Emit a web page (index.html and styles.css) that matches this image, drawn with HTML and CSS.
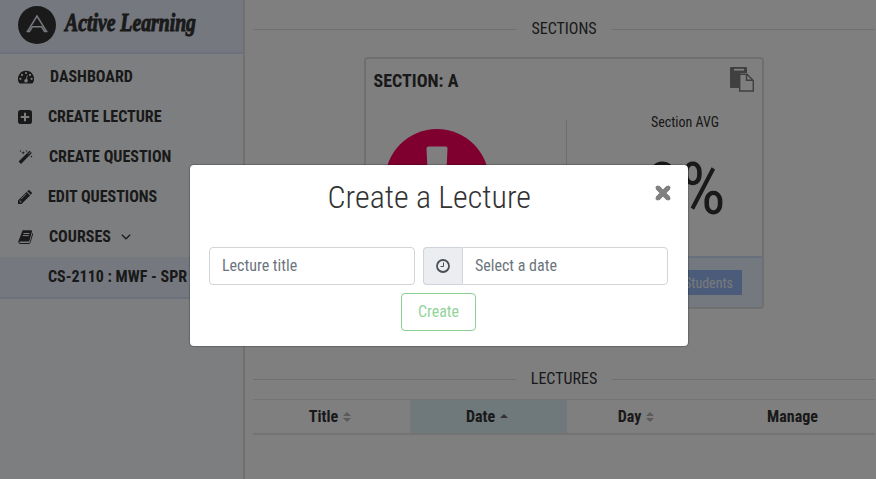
FILE: index.html
```html
<!DOCTYPE html>
<html lang="en">
<head>
<meta charset="utf-8">
<title>Active Learning</title>
<link rel="stylesheet" href="styles.css">
</head>
<body>
<div class="app">
  <aside class="sidebar">
    <header class="brand">
      <svg class="brand-mark" viewBox="0 0 38 38"><circle cx="19" cy="19" r="19" fill="#343434"/><path d="M8.500 25.400H11.500L14.500 20.700H23.500L26.500 25.400H29.500M9.500 25.400 19 10 28.500 25.400" fill="none" stroke="#ecf0ff" stroke-width="1.500"/></svg>
      <svg class="brand-name" width="150" height="40"><text x="3" y="25" textLength="131" lengthAdjust="spacingAndGlyphs">Active Learning</text></svg>
    </header>
    <nav class="menu">
      <a class="item"><svg class="icon wide" viewBox="0 0 16 14"><path d="M8 .8a8 8 0 0 0-6.800 12.300q.2.4.7.4H14q.5 0 .8-.4A8 8 0 0 0 8 .8Z" fill="#333"/><g fill="#fafcff"><circle cx="2.400" cy="8.800" r="1.100"/><circle cx="4" cy="4.900" r="1.100"/><circle cx="8" cy="3.100" r="1.100"/><circle cx="12" cy="4.900" r="1.100"/><circle cx="13.600" cy="8.800" r="1.100"/><path d="m9 5.300.8.200-.9 3.600a1.800 1.800 0 1 1-.9-.2Z"/></g></svg><span class="label">DASHBOARD</span></a>
      <a class="item"><svg class="icon" viewBox="0 0 14 14"><rect width="14" height="14" rx="2.800" fill="#333"/><path d="M7 2.800v8.400M2.800 7h8.400" stroke="#fafcff" stroke-width="2"/></svg><span class="label">CREATE LECTURE</span></a>
      <a class="item"><svg class="icon mid" viewBox="0 0 15 15"><path d="M1.400 13.600 13 2" stroke="#333" stroke-width="3.600"/><path d="m10.400 4.600 2.200-2.200" stroke="#fafcff" stroke-width="1"/><path d="m5 1 .5 1.500L7 3l-1.500.5L5 5l-.5-1.500L3 3l1.500-.5ZM2 0l.4.800.8.300-.8.300L2 2.200l-.4-.8L.8 1l.8-.2ZM8.500 0l.4.800.8.300-.8.300-.4.800-.4-.8-.8-.3.800-.3ZM13.800 6l.4.800.8.300-.8.300-.4.800-.4-.8-.8-.3.800-.3Z" fill="#333"/></svg><span class="label">CREATE QUESTION</span></a>
      <a class="item"><svg class="icon" viewBox="0 0 14 14"><path d="M0 14V10.500L8.600 1.900l3.500 3.500L3.500 14ZM9.300 1.200 10.200.3q.6-.6 1.200 0l2.300 2.300q.6.6 0 1.200l-.9.9Z" fill="#333"/><path d="M1.300 11h1.500v1.700M3 9.200l5.400-5.400" fill="none" stroke="#fafcff" stroke-width=".8"/></svg><span class="label">EDIT QUESTIONS</span></a>
      <a class="item"><svg class="icon mid" viewBox="0 0 15 14"><path d="M4.600.3h8.500q1.200.2.9 1.300l-2.500 8.800q-.4 1-1.400 1H2q-1 .2-.5 1 .2.500 1 .500h8.300q.8 0 1-.6L14.400 3q1 .4.600 1.600l-2.500 8q-.5 1.400-1.700 1.400H2.300Q.3 13.800.2 11.700Z" fill="#333"/><path d="M5.500 3.500h6M4.800 5.600h6" stroke="#fafcff"/></svg><span class="label">COURSES</span><svg class="chevron" viewBox="0 0 10 6"><path d="m.8.8 4.200 4 4.200-4" fill="none" stroke="#333" stroke-width="1.200"/></svg></a>
      <a class="item sub"><span class="label">CS-2110 : MWF - SPR</span></a>
    </nav>
  </aside>
  <main class="main">
    <h2 class="divider sections">SECTIONS</h2>
    <section class="card">
      <header class="card-head"><h3>SECTION: A</h3><svg class="paste" viewBox="0 0 24 25"><path d="M1 0h15q1 0 1 1v5h-5q-3 0-3 3v12H1q-1 0-1-1V1q0-1 1-1Z" fill="#808080"/><path d="M4 2.700h10" stroke="#fff" stroke-width="1.800"/><path d="M9.700 7.200h7.300l6.300 6.300v10.600H9.700ZM16.500 7.200v6h6.800" fill="#fff" stroke="#808080" stroke-width="1.500"/></svg></header>
      <div class="card-body">
        <div class="half"><svg class="alert" viewBox="0 0 104 104"><circle cx="52" cy="52" r="52" fill="#ff005f"/><path d="M43.500 17.500h17q2 0 2 2L60.500 62h-17L41.500 19.500q0-2 2-2ZM44 69h16v16H44Z" fill="#fff"/></svg></div>
        <div class="half stats"><span class="avg">Section AVG</span><strong class="score">0%</strong></div>
      </div>
      <footer class="card-foot"><button class="students">Students</button></footer>
    </section>
    <h2 class="divider lectures">LECTURES</h2>
    <div class="table">
      <div class="th">Title<svg class="sort" viewBox="0 0 8 10"><path d="m0 4 4-4 4 4ZM0 6l4 4 4-4Z" fill="#b4b4b4"/></svg></div>
      <div class="th active">Date<svg class="sort" viewBox="0 0 8 10"><path d="m0 6 4-4 4 4Z" fill="#666"/></svg></div>
      <div class="th">Day<svg class="sort" viewBox="0 0 8 10"><path d="m0 4 4-4 4 4ZM0 6l4 4 4-4Z" fill="#b4b4b4"/></svg></div>
      <div class="th">Manage</div>
    </div>
  </main>
</div>
<div class="backdrop">
  <div class="modal">
    <div class="modal-head"><h1>Create a Lecture</h1><svg class="close" viewBox="0 0 16 16"><path d="m2.600 2.600 10.800 10.800M13.400 2.600 2.600 13.400" stroke="#808080" stroke-width="5"/><path d="m2.600 2.600 10.800 10.800M13.400 2.600 2.600 13.400" stroke="#808080" stroke-width="4" stroke-linecap="round"/></svg></div>
    <div class="fields">
      <div class="input title">Lecture title</div>
      <div class="group"><div class="addon"><svg class="clock" viewBox="0 0 14 14"><circle cx="7" cy="7" r="6" fill="none" stroke="#495057" stroke-width="1.800"/><path d="M7.500 3.500v4H4.500" fill="none" stroke="#495057" stroke-width="1"/></svg></div><div class="input date">Select a date</div></div>
    </div>
    <button class="create">Create</button>
  </div>
</div>
</body>
</html>
```
FILE: styles.css
```css
* { box-sizing: border-box; }
body { margin: 0; overflow: hidden; background: #fff; color: #333; font: 400 16px/24px "Roboto Condensed", Roboto, sans-serif; font-stretch: 75%; }
h1, h2, h3 { margin: 0; font-weight: 400; }
button { font: inherit; font-stretch: 75%; }
svg { display: block; flex: none; }
.app { display: flex; width: 876px; height: 479px; }
.sidebar { width: 245px; flex: none; background: #fafcff; border-right: 2px solid #e0e0e0; }
.brand { display: flex; height: 54px; padding: 6px 0 0 18px; background: #eaf0fe; border-bottom: 2px solid #d8e2fa; }
.brand-mark { width: 38px; height: 38px; }
.brand-name { margin-left: 6px; overflow: visible; }
.brand-name text { font: italic 700 25px "Liberation Serif", serif; fill: #343434; stroke: #343434; stroke-width: 1px; }
.menu { padding-top: 3px; }
.item { display: flex; align-items: center; height: 40px; padding-left: 18px; white-space: nowrap; font-weight: 700; }
.icon { width: 14px; height: 14px; margin-right: 16px; }
.icon.mid { width: 15px; }
.icon.wide { width: 16px; }
.chevron { width: 10px; height: 6px; margin-left: 10px; }
.item.sub { height: 42px; padding: 0 0 0 48px; background: #eaf0fe; border-bottom: 2px solid #d8e2fa; }
.main { flex: 1; padding: 0 1px 0 8px; }
.divider { display: flex; align-items: center; gap: 15px; font-size: 16px; height: 24px; }
.divider::before, .divider::after { content: ""; flex: 1; height: 1px; background: #dedede; }
.sections { margin-top: 17px; }
.card { width: 400px; height: 252px; margin: 16px 0 0 111px; border: 2px solid #dfdfdf; border-radius: 4px; display: flex; flex-direction: column; }
.card-head { display: flex; justify-content: space-between; padding: 8px 8px 0 7.5px; height: 61px; }
.card-head h3 { font-size: 18px; font-weight: 700; line-height: 28px; }
.paste { width: 24px; height: 25px; }
.card-body { display: flex; flex: 1; }
.half { width: 200px; }
.half:first-child { flex: none; }
.alert { width: 104px; height: 104px; margin: 9px 0 0 19px; }
.stats { display: flex; flex-direction: column; align-items: center; padding-left: 41px; border-left: 1px solid #dfdfdf; }
.avg { font-size: 14px; line-height: 4px; }
.score { font-size: 72px; line-height: 70px; font-weight: 400; margin-top: 31px; }
.card-foot { height: 51px; border-top: 2px solid #d3e0fa; background: #e8f1ff; padding: 12px 20px; display: flex; justify-content: flex-end; }
.students { border: 0; height: 25px; background: #95b8f2; color: #f0f4fa; font-size: 14px; line-height: 24px; padding: 0 9px; }
.lectures { margin-top: 58px; }
.table { display: grid; grid-template-columns: 157px 157px 141px 1fr; height: 36px; margin-top: 8px; border-top: 1px solid #e7e7e7; border-bottom: 2px solid #e7e7e7; }
.th { display: flex; align-items: center; justify-content: center; padding-right: 3px; font-weight: 700; }
.th:last-child { padding: 0 0 0 2px; }
.active { background: #dff0f5; }
.sort { width: 8px; height: 10px; margin-left: 5px; }
.backdrop { position: absolute; inset: 0; background: rgba(0,0,0,.5); padding: 165px 0 0 190px; }
.modal { width: 498px; height: 181px; border-radius: 4px; background: #fff; box-shadow: 0 0 1px 1px rgba(0,0,0,.2); display: flex; flex-direction: column; align-items: flex-start; }
.modal-head { width: 100%; height: 82px; display: flex; justify-content: space-between; padding: 13px 17px 0 137.5px; }
.modal-head h1 { font-size: 32px; line-height: 38px; font-weight: 300; }
.close { width: 16px; height: 16px; margin-top: 7px; }
.fields { display: flex; gap: 8px; width: 459px; height: 38px; margin-left: 19px; }
.input { border: 1px solid #d2d5d8; border-radius: 4px; padding: 6px 12px; color: #6c757d; background: #fff; }
.title { width: 206px; }
.group { display: flex; width: 245px; }
.addon { width: 39px; border: 1px solid #ced4da; border-right: 0; border-radius: 4px 0 0 4px; background: #ebedf0; display: grid; place-items: center; }
.clock { width: 14px; height: 14px; }
.date { flex: 1; border-radius: 0 4px 4px 0; }
.create { width: 75px; height: 38px; margin: 8px 0 0 211px; border: 1px solid #8bcf92; border-radius: 4px; background: #fff; color: #93d39a; padding: 0; }
```
